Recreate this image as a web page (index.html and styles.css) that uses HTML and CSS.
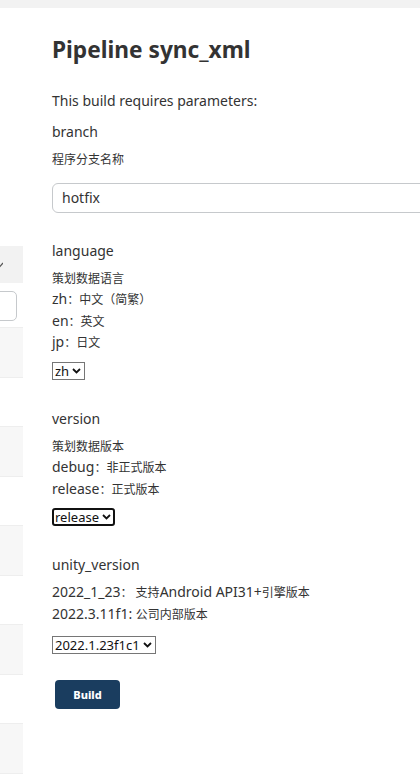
FILE: index.html
```html
<!DOCTYPE html>
<html lang="zh">
<head>
<meta charset="utf-8">
<title>Pipeline sync_xml</title>
<link rel="stylesheet" href="styles.css">
</head>
<body>
<div class="topbar"></div>
<div class="page">
  <aside class="side">
    <div class="side-head"><svg class="tick" width="6" height="6" viewBox="0 0 6 6"><path d="M0 2 L3 4.5 L6 1" fill="none" stroke="#555" stroke-width="1.2"/></svg></div>
    <div class="side-input"></div>
    <div class="side-card first"></div>
    <div class="side-card"></div>
    <div class="side-card"></div>
    <div class="side-card"></div>
    <div class="side-card"></div>
  </aside>
  <main class="main">
    <h1 class="title">Pipeline sync_xml</h1>
    <p class="intro">This build requires parameters:</p>

    <section class="param">
      <div class="pname">branch</div>
      <div class="pdesc"><span class="c">程序分支名称</span></div>
      <div class="textbox">hotfix</div>
    </section>

    <section class="param">
      <div class="pname">language</div>
      <div class="pdesc"><span class="c">策划数据语言</span><br>zh<span class="c">：中文（简繁）</span><br>en<span class="c">：英文</span><br>jp<span class="c">：日文</span></div>
      <div class="select"><span>zh</span><svg class="chev" width="9" height="6" viewBox="0 0 9 6"><path d="M1 1 L4.5 4.5 L8 1" fill="none" stroke="#111" stroke-width="1.8"/></svg></div>
    </section>

    <section class="param">
      <div class="pname">version</div>
      <div class="pdesc"><span class="c">策划数据版本</span><br>debug<span class="c">：非正式版本</span><br>release<span class="c">：正式版本</span></div>
      <div class="select focused"><span>release</span><svg class="chev" width="9" height="6" viewBox="0 0 9 6"><path d="M1 1 L4.5 4.5 L8 1" fill="none" stroke="#111" stroke-width="1.8"/></svg></div>
    </section>

    <section class="param">
      <div class="pname">unity_version</div>
      <div class="pdesc">2022_1_23<span class="c">： 支持</span>Android API31+<span class="c">引擎版本</span><br>2022.3.11f1: <span class="c">公司内部版本</span></div>
      <div class="select low"><span>2022.1.23f1c1</span><svg class="chev" width="9" height="6" viewBox="0 0 9 6"><path d="M1 1 L4.5 4.5 L8 1" fill="none" stroke="#111" stroke-width="1.8"/></svg></div>
    </section>

    <button class="build">Build</button>
  </main>
</div>
</body>
</html>
```

FILE: styles.css
```css
html, body {
  margin: 0;
  padding: 0;
  background: #fff;
}
body {
  font-family: "Noto Sans", "Noto Sans CJK SC", sans-serif;
  color: #333;
  overflow: hidden;
}
.topbar {
  height: 8px;
  background: #f2f2f2;
}
.page {
  display: flex;
  align-items: flex-start;
  overflow: hidden;
  width: 420px;
}
.side {
  width: 23px;
  flex: none;
  display: flex;
  flex-direction: column;
  padding-top: 238px;
}
.side-head {
  height: 37px;
  background: #f2f2f2;
  display: flex;
  align-items: center;
}
.tick {
  margin-left: -3px;
}
.side-input {
  margin-top: 8px;
  height: 28px;
  width: 30px;
  margin-left: -15px;
  border: 1px solid #c6c9cc;
  border-radius: 5px;
}
.side-card {
  margin-top: 48px;
  height: 51px;
  background: #f7f7f7;
  border-top: 1px solid #eeeeee;
  border-bottom: 1px solid #eeeeee;
  box-sizing: border-box;
}
.side-card.first {
  margin-top: 6px;
}
.main {
  flex: 1;
  min-width: 0;
  padding-left: 29px;
}
.title {
  margin: 25px 0 0;
  font-size: 22.7px;
  font-weight: 700;
  line-height: 34px;
  color: #333;
}
.intro {
  margin: 24px 0 0;
  font-size: 14px;
  line-height: 20px;
}
.c {
  font-size: 12px;
  line-height: 14px;
}
.param {
  margin-top: 11px;
}
.param + .param {
  margin-top: 28px;
}
.pname {
  font-size: 14px;
  line-height: 20px;
}
.pdesc {
  margin-top: 6px;
  font-size: 14px;
  line-height: 21.5px;
}
.textbox {
  margin-top: 13px;
  width: calc(100% + 30px);
  height: 30px;
  box-sizing: border-box;
  border: 1px solid #c6c9cc;
  border-radius: 6px;
  font-size: 14px;
  line-height: 28px;
  padding-left: 9px;
}
.select {
  margin-top: 9px;
  display: inline-flex;
  align-items: center;
  gap: 3px;
  height: 18px;
  box-sizing: border-box;
  border: 1px solid #767676;
  padding: 0 3px 0 2px;
  font-size: 13px;
  line-height: 16px;
  color: #111;
}
.select.low {
  margin-top: 12px;
}
.select.focused {
  border: 2px solid #111;
  border-radius: 3px;
  padding: 0 2px 0 1px;
}
.build {
  display: block;
  margin: 25px 0 0 3px;
  width: 65px;
  height: 29px;
  border: none;
  border-radius: 4px;
  background: #1a3d5f;
  color: #fff;
  font-family: "Noto Sans", sans-serif;
  font-weight: 800;
  font-size: 11px;
  padding: 0;
}
```
